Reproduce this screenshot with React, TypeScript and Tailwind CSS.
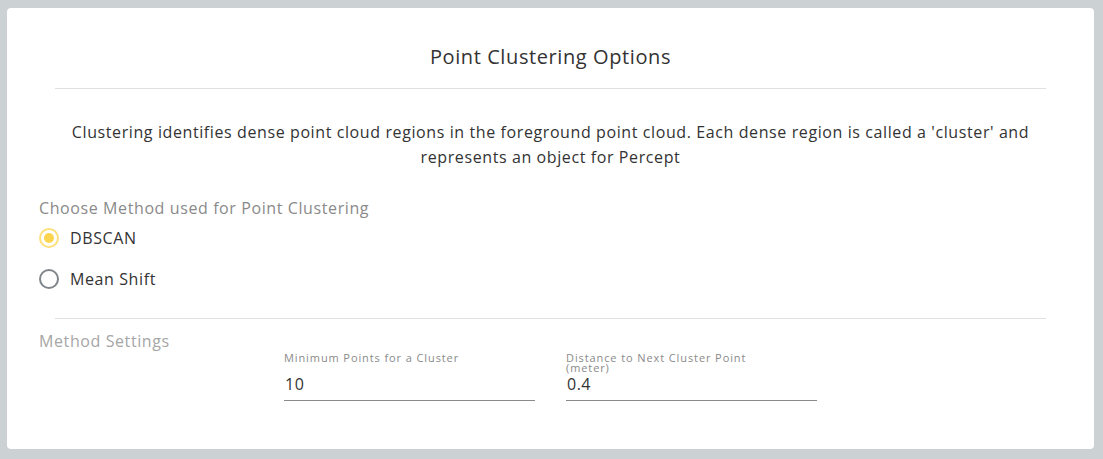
import { useState } from "react"

const font = { fontFamily: "'Open Sans', 'Liberation Sans', sans-serif" }

function Radio({ label, checked, onClick }: { label: string; checked: boolean; onClick: () => void }) {
  return (
    <button type="button" onClick={onClick} className="flex items-center gap-[11px] h-[41px] text-left">
      <span
        className={
          "w-[20px] h-[20px] rounded-full border-2 flex items-center justify-center " +
          (checked ? "border-[#fde07a]" : "border-[#80868b]")
        }
      >
        {checked && <span className="w-[10px] h-[10px] rounded-full bg-[#fbd54e]" />}
      </span>
      <span className="text-[16px] text-[#333] tracking-[0.6px]">{label}</span>
    </button>
  )
}

function Field({ label, value }: { label: string; value: string }) {
  return (
    <div className="w-[251px] flex flex-col">
      <div className="text-[11px] leading-[10px] text-[#8a8a8a] h-[22px] pt-[1px] tracking-[0.9px] w-[200px]">{label}</div>
      <div className="text-[16px] text-[#333] leading-[20px] border-b border-[#8a8a8a] pb-[6px] pl-[1px] tracking-[0.5px]">{value}</div>
    </div>
  )
}

export default function App() {
  const [method, setMethod] = useState("DBSCAN")

  return (
    <div className="w-[1103px] h-[459px] bg-[#ccd1d3] p-[8px] pl-[7px] pr-[9px] pb-[10px]" style={font}>
      <div className="bg-white rounded-[4px] h-full px-[32px] pt-[35px]">
        <h1 className="text-[20px] text-[#333] text-center leading-[28px] tracking-[0.6px]">Point Clustering Options</h1>
        <div className="mx-[16px] mt-[17px] border-t border-[#e0e0e0]" />
        <p className="mt-[31px] text-center text-[16px] leading-[25px] text-[#333] px-[30px] tracking-[0.6px]">
          Clustering identifies dense point cloud regions in the foreground point cloud. Each dense region is called a 'cluster' and represents an object for Percept
        </p>
        <div className="mt-[27px] text-[16px] text-[#8a8a8a] leading-[22px] tracking-[0.6px]">Choose Method used for Point Clustering</div>
        <div className="flex flex-col -mt-[2px]">
          {["DBSCAN", "Mean Shift"].map(m => (
            <Radio key={m} label={m} checked={method === m} onClick={() => setMethod(m)} />
          ))}
        </div>
        <div className="mx-[16px] mt-[19px] border-t border-[#e0e0e0]" />
        <div className="mt-[11px] text-[16px] text-[#a6a6a6] leading-[22px] tracking-[0.6px]">Method Settings</div>
        <div className="flex gap-[31px] pl-[245px] mt-[0px]">
          <Field label="Minimum Points for a Cluster" value="10" />
          <Field label="Distance to Next Cluster Point (meter)" value="0.4" />
        </div>
      </div>
    </div>
  )
}
